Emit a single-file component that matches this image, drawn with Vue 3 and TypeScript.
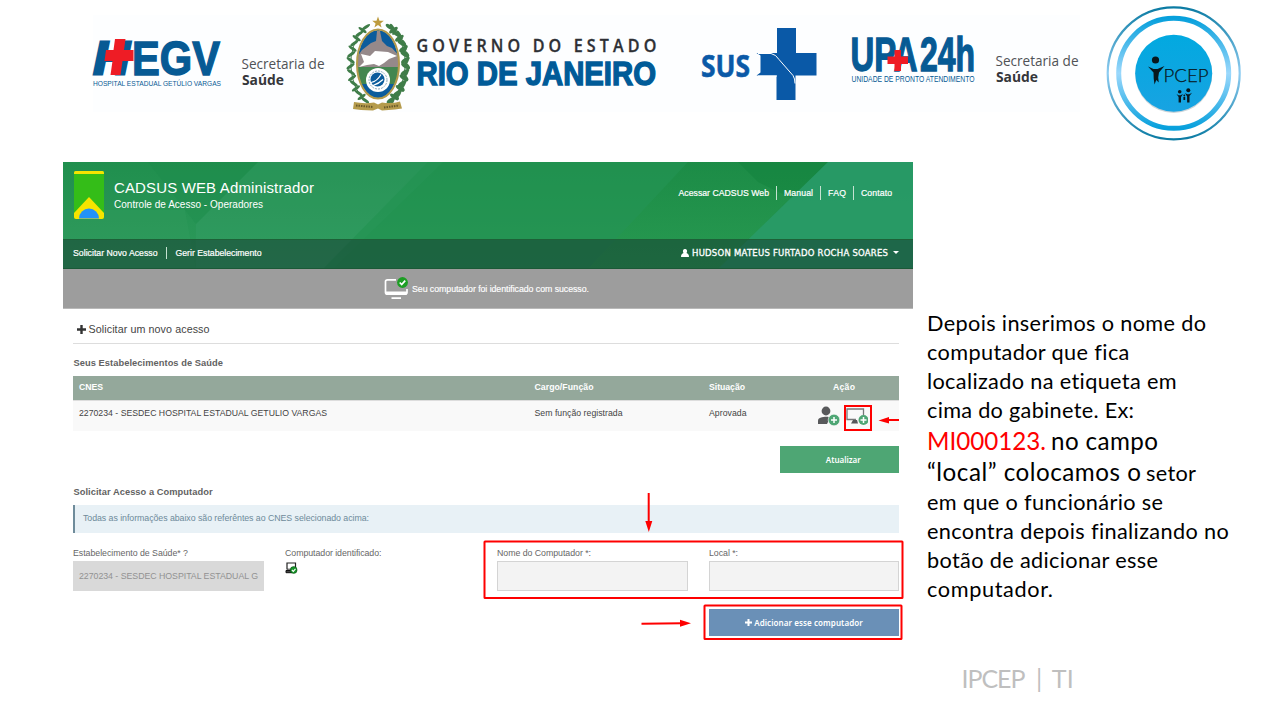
<script setup lang="ts">
interface Line {
  size: 'md' | 'lg' | 'xl'
  parts: { text: string; width: number; kind?: string }[]
}

// Spreads the letters of an element so that its text takes the given width.
const vFit = {
  mounted(el: HTMLElement, binding: { value: number }) {
    const count = (el.textContent ?? '').length
    const natural = el.getBoundingClientRect().width
    if (count > 1) {
      const gap = (binding.value - natural) / (count - 1)
      el.style.letterSpacing = `${gap.toFixed(4)}px`
      el.style.marginRight = `${(-gap).toFixed(4)}px`
    }
  },
}

const lines: Line[] = [
  { size: 'md', parts: [{ text: 'Depois inserimos o nome do', width: 279 }] },
  { size: 'md', parts: [{ text: 'computador que fica', width: 202 }] },
  { size: 'md', parts: [{ text: 'localizado na etiqueta em', width: 250 }] },
  { size: 'md', parts: [{ text: 'cima do gabinete. Ex:', width: 207 }] },
  { size: 'lg', parts: [{ text: 'MI000123.', width: 119, kind: 'red' }, { text: 'no campo', width: 107 }] },
  { size: 'xl', parts: [{ text: '“local” colocamos o', width: 214 }, { text: 'setor', width: 50, kind: 'small' }] },
  { size: 'md', parts: [{ text: 'em que o funcionário se', width: 236 }] },
  { size: 'md', parts: [{ text: 'encontra depois finalizando no', width: 301.5 }] },
  { size: 'md', parts: [{ text: 'botão de adicionar esse', width: 231 }] },
  { size: 'md', parts: [{ text: 'computador.', width: 126 }] },
]

const links = [
  { text: 'Acessar CADSUS Web', width: 90.5 },
  { text: 'Manual', width: 29 },
  { text: 'FAQ', width: 18 },
  { text: 'Contato', width: 31 },
]

const leaves = Array.from({ length: 16 }, (_, i) => {
  const t = -1.12 + (i * 2.2) / 15
  return { dx: Math.cos(t) * 27.5, y: 64 + Math.sin(t) * 41, r: i % 2 ? 35 : -35 }
})
</script>

<template>
  <div class="slide">
    <header class="logos">
      <svg width="260" height="145" viewBox="80 0 260 145">
        <rect x="93" y="15" width="247" height="97" fill="#fdfeff" />
        <g class="heavy blue">
          <text class="thick" x="93.500" y="74" font-size="46" font-style="italic" textLength="36" lengthAdjust="spacingAndGlyphs">H</text>
          <text x="132" y="74.500" font-size="47.500" textLength="88" lengthAdjust="spacingAndGlyphs">EGV</text>
        </g>
        <path d="M115 39h10.500l-1.500 11h9.500v11h-11l-2 14h-10l2-14h-8l1.500-11h7.500z" fill="#ee1c25" />
        <text class="sans blue" x="93" y="85.500" font-size="8" textLength="128" lengthAdjust="spacingAndGlyphs">HOSPITAL ESTADUAL GETÚLIO VARGAS</text>
        <text class="open" x="241.500" y="68.500" font-size="14.500" fill="#505256" textLength="83" lengthAdjust="spacingAndGlyphs">Secretaria de</text>
        <text class="open bold" x="242" y="84.500" font-size="14.500" fill="#35363a" textLength="42" lengthAdjust="spacingAndGlyphs">Saúde</text>
      </svg>

      <svg width="330" height="145" viewBox="340 0 330 145">
        <rect x="340" y="15" width="330" height="97" fill="#fdfeff" />
        <defs><clipPath id="shield"><ellipse cx="378" cy="64" rx="20.500" ry="34" /></clipPath></defs>
        <g fill="none" stroke="#3c7a48" stroke-width="1">
          <path d="M365 27Q349 45 351 68T366 101M391 27Q407 45 405 68T390 101" />
        </g>
        <g v-for="(l, i) in leaves" :key="i" fill="#3f7d49">
          <ellipse :cx="378 - l.dx" :cy="l.y" rx="4.800" ry="1.500" :transform="`rotate(${l.r} ${378 - l.dx} ${l.y})`" />
          <ellipse :cx="378 + l.dx" :cy="l.y" rx="5" ry="2" :transform="`rotate(${-l.r} ${378 + l.dx} ${l.y})`" />
          <ellipse :cx="378 + l.dx + 1" :cy="l.y - 2" rx="3.400" ry="1.400" :transform="`rotate(${l.r + 90} ${378 + l.dx} ${l.y})`" />
        </g>
        <g clip-path="url(#shield)">
          <rect x="355" y="28" width="46" height="72" fill="#0b5c9c" />
          <path d="M355 60L362 50L371 43L376 41L377 31L380 31L382 41L387 46L392 48L401 58V68H355z" fill="#95898a" />
          <rect x="355" y="67" width="46" height="18" fill="#438650" />
          <rect x="355" y="84" width="46" height="16" fill="#0b5c9c" />
        </g>
        <ellipse cx="378" cy="64" rx="21" ry="34.500" fill="none" stroke="#b39a4b" stroke-width="2" />
        <path d="M361 54l9 2 5-5 13 1 9 4-8 3-5 4-5 3-5-2-7 1-8 2 5-5z" fill="#fff" />
        <circle cx="378" cy="80" r="12" fill="#fff" />
        <circle cx="378" cy="80" r="9" fill="none" stroke="#8aa9bd" stroke-width="1" stroke-dasharray="2 1" />
        <circle cx="377.500" cy="79.500" r="7" fill="#0b5c9c" />
        <path d="M371 82.500q6-1 10-8M373 85.500q6-2 10-6" fill="none" stroke="#fff" stroke-width="1.200" />
        <path d="M378 16.500l1.500 4.200h4.300l-3.400 2.700 1.200 4.200-3.600-2.600-3.600 2.600 1.200-4.200-3.400-2.700h4.300z" fill="#bd9b3e" />
        <path d="M354 102q10 2 20 .5l4 2 4-2q10 1.500 18-1l2 7-7 1-13 1-4-2-5 2-12-.5-8-1z" fill="#b59b4c" />
        <path d="M356 105.500l17 1.500M384 107.500l15-2" stroke="#695a2a" stroke-width="2" stroke-dasharray="1.500 1" />
        <g transform="translate(416.500 51.500) scale(.93 1)">
          <text class="open semi" x="0" y="0" font-size="17.300" fill="#2e3035" stroke="#2e3035" stroke-width=".3" textLength="258">GOVERNO DO ESTADO</text>
        </g>
        <text class="heavy blue2" x="416.500" y="85" font-size="33" textLength="239.500" lengthAdjust="spacingAndGlyphs">RIO DE JANEIRO</text>
      </svg>

      <svg width="170" height="145" viewBox="670 0 170 145">
        <rect x="670" y="15" width="170" height="97" fill="#fdfeff" />
        <text class="open bold" x="701" y="77" font-size="31" fill="#0a59a7" stroke="#0a59a7" stroke-width=".6" textLength="49" lengthAdjust="spacingAndGlyphs">SUS</text>
        <path d="M777 28h19v25h20.500v22.500h-21v24.500h-19v-24.500h-20l4-3v-17l-4-2.500h20.500z" fill="#0a59a7" />
        <path d="M758 53.500h13q5 1 8 6l14 16q2 3 2 8M758 76h19" fill="none" stroke="#fff" stroke-width="1" />
      </svg>

      <svg width="260" height="145" viewBox="840 0 260 145">
        <rect x="840" y="15" width="240" height="97" fill="#fdfeff" />
        <text class="heavy blue" x="850.500" y="71" font-size="48" textLength="67" lengthAdjust="spacingAndGlyphs">UPA</text>
        <text class="heavy blue" x="920" y="71" font-size="48" textLength="55" lengthAdjust="spacingAndGlyphs">24h</text>
        <path d="M894.500 50h6.500v6.500h7v7.500h-7v7h-6.500v-7h-7v-7.500h7z" fill="#ee1c25" />
        <text class="sans blue" x="851.500" y="81.500" font-size="8.500" textLength="123" lengthAdjust="spacingAndGlyphs">UNIDADE DE PRONTO ATENDIMENTO</text>
        <text class="open" x="995.500" y="65.500" font-size="14.500" fill="#505256" textLength="83" lengthAdjust="spacingAndGlyphs">Secretaria de</text>
        <text class="open bold" x="996" y="81.500" font-size="14.500" fill="#35363a" textLength="42" lengthAdjust="spacingAndGlyphs">Saúde</text>
      </svg>

      <svg width="150" height="145" viewBox="1100 0 150 145">
        <defs>
          <linearGradient id="outer" x2="0" y2="1">
            <stop offset="0" stop-color="#0b7ba3" /><stop offset=".5" stop-color="#8fcdf2" /><stop offset="1" stop-color="#0b7ba3" />
          </linearGradient>
          <linearGradient id="inner" x2="0" y2="1">
            <stop offset="0" stop-color="#07a0dc" /><stop offset=".5" stop-color="#9bd8fc" /><stop offset="1" stop-color="#07a0dc" />
          </linearGradient>
          <linearGradient id="disc" x2="0" y2="1">
            <stop offset="0" stop-color="#02a9e0" /><stop offset="1" stop-color="#18a3e2" />
          </linearGradient>
        </defs>
        <circle cx="1173.700" cy="73.300" r="66" fill="#fff" stroke="url(#outer)" stroke-width="2.200" />
        <circle cx="1173.700" cy="73.300" r="55" fill="none" stroke="url(#inner)" stroke-width="5" />
        <circle cx="1173.700" cy="74.500" r="38.500" fill="#a9b8c0" opacity=".6" />
        <circle cx="1173.700" cy="73.300" r="38.500" fill="url(#disc)" />
        <g fill="#08171d">
          <circle cx="1155.500" cy="60" r="3.600" />
          <path d="M1148 66.500l5.500 2.500h4l7-3-5.500 6.500-.8 5 .6 5-2.500-2.500-1.800 4.500-.8-6-.2-6z" />
          <circle cx="1179.700" cy="91.800" r="1.800" /><circle cx="1188.300" cy="90.300" r="2" />
          <path d="M1176.500 94l2 1.200h2l2.500-1.200-2 3v5.500h-2.400V97zM1185 93l2.300 1.300h2l2.700-1.500-2.500 3.200v6.500h-2.400V96.500z" />
          <circle cx="1184.300" cy="95.500" r=".9" /><path d="M1183.400 97h1.800v3h-1.800z" />
        </g>
        <text class="pcep" x="1163.500" y="81.500" font-size="17" textLength="45" lengthAdjust="spacingAndGlyphs">PCEP</text>
      </svg>
    </header>

    <main class="body">
      <section class="app">
        <div class="top">
          <svg class="pattern" width="850" height="107" viewBox="0 0 850 107">
            <defs>
              <linearGradient id="base" x2="0" y2="1"><stop offset="0" stop-color="#208f4e" /><stop offset="1" stop-color="#2d9a5b" /></linearGradient>
              <linearGradient id="band" x2="0" y2="1"><stop offset="0" stop-color="#1a8a43" /><stop offset="1" stop-color="#269a4d" /></linearGradient>
            </defs>
            <rect width="850" height="107" fill="url(#base)" />
            <path d="M85 0L133 62L195 0z" fill="#188446" opacity=".18" />
            <path d="M133 62L195 0H380L270 107H133z" fill="#3da070" opacity=".28" />
            <path d="M0 48H122L133 107H0z" fill="#38a062" opacity=".25" />
            <path d="M365 0H625L525 107H260z" fill="#219250" opacity=".6" />
            <path d="M625 0H765L655 107H525z" fill="url(#band)" opacity=".7" />
            <path d="M675 0H765L730 37L695 20z" fill="#0f7d38" opacity=".35" />
            <path d="M765 0H850V107H655z" fill="#289a66" opacity=".95" />
          </svg>
          <div class="brand-row">
            <svg class="flag" width="30" height="48" viewBox="0 0 30 48">
              <rect width="30" height="48" rx="1.500" fill="#34bd18" />
              <path d="M0 3V1.500Q0 0 1.500 0h27Q30 0 30 1.500V3z" fill="#f5e400" />
              <path d="M0 42L15 26L30 42V46q0 2-2 2H2q-2 0-2-2z" fill="#f5e400" />
              <path d="M5 47.500a10 10 0 0 1 20 0z" fill="#2292f8" />
            </svg>
            <div class="brand">
              <div class="name"><span v-fit="200">CADSUS WEB Administrador</span></div>
              <div class="sub"><span v-fit="149">Controle de Acesso - Operadores</span></div>
            </div>
            <nav class="links">
              <a v-for="l in links" :key="l.text"><span v-fit="l.width">{{ l.text }}</span></a>
            </nav>
          </div>
          <div class="menu">
            <nav class="links left">
              <a><span v-fit="84.5">Solicitar Novo Acesso</span></a>
              <a><span v-fit="86">Gerir Estabelecimento</span></a>
            </nav>
            <div class="user">
              <svg width="8" height="8" viewBox="0 0 8 8"><path d="M4 0a2 2.300 0 0 1 1.500 3.900Q8 4.500 8 8H0Q0 4.500 2.500 3.900A2 2.300 0 0 1 4 0z" fill="#fff" /></svg>
              <span v-fit="196">HUDSON MATEUS FURTADO ROCHA SOARES</span>
              <i class="caret"></i>
            </div>
          </div>
        </div>
        <div class="notice">
          <svg width="25" height="24" viewBox="0 0 25 24">
            <path d="M12 2.800H3.500Q1.500 2.800 1.500 4.500V15.500q0 1.500 2 1.500H21q2 0 2-1.500V12" fill="none" stroke="#fff" stroke-width="1.700" />
            <path d="M1.500 14.500h21.500v2.500q0 1-1.500 1H3q-1.500 0-1.500-1zM7.500 20.300h9.500v1.700h-9.500z" fill="#fff" />
            <circle cx="18.500" cy="5.500" r="5.400" fill="#1d9e24" />
            <path d="M15.700 5.500l2 2 3.500-3.800" fill="none" stroke="#fff" stroke-width="1.700" />
          </svg>
          <span v-fit="177">Seu computador foi identificado com sucesso.</span>
        </div>

        <div class="content">
          <div class="new">
            <svg width="9" height="9" viewBox="0 0 9 9"><path d="M3.300 0h2.400v3.300H9v2.400H5.700V9H3.300V5.700H0V3.300h3.300z" fill="#333" /></svg>
            <span v-fit="121">Solicitar um novo acesso</span>
          </div>
          <h2><span v-fit="149.5">Seus Estabelecimentos de Saúde</span></h2>
          <div class="row head">
            <b><span v-fit="24">CNES</span></b>
            <b><span v-fit="59">Cargo/Função</span></b>
            <b><span v-fit="36">Situação</span></b>
            <b class="act"><span v-fit="22">Ação</span></b>
          </div>
          <div class="row data">
            <div><span v-fit="248">2270234 - SESDEC HOSPITAL ESTADUAL GETULIO VARGAS</span></div>
            <div><span v-fit="88">Sem função registrada</span></div>
            <div><span v-fit="37.5">Aprovada</span></div>
            <div class="icons">
              <svg width="23" height="20" viewBox="0 0 23 20">
                <circle cx="9" cy="5" r="4.400" fill="#58595b" />
                <path d="M1 18V14.500Q1 11.500 8 10.800H11L13 12L10 18z" fill="#58595b" />
                <circle cx="17" cy="14" r="5.800" fill="#4ea674" stroke="#f9f9f9" stroke-width=".6" />
                <path d="M17 11v6M14 14h6" stroke="#fff" stroke-width="1.500" />
              </svg>
              <svg width="24" height="20" viewBox="0 0 24 20">
                <path d="M19.500 9V3H3V13.500H12" fill="none" stroke="#77787a" stroke-width="1.300" />
                <path d="M9 14h4l1 3.500H7z" fill="#55565a" />
                <circle cx="19.500" cy="14" r="5" fill="#4ea674" />
                <path d="M19.500 11v6M16.500 14h6" stroke="#fff" stroke-width="1.500" />
              </svg>
            </div>
          </div>
          <div class="actions"><button class="green"><span v-fit="35">Atualizar</span></button></div>
          <h2 class="second"><span v-fit="139">Solicitar Acesso a Computador</span></h2>
          <div class="info"><span v-fit="286">Todas as informações abaixo são referêntes ao CNES selecionado acima:</span></div>
          <div class="form">
            <label><span v-fit="115">Estabelecimento de Saúde* ?</span><div class="field off"><span v-fit="179">2270234 - SESDEC HOSPITAL ESTADUAL G</span></div></label>
            <label><span v-fit="96.5">Computador identificado:</span>
              <svg class="pc" width="13" height="12" viewBox="0 0 13 12">
                <path d="M2 7.500V1h8.500V5" fill="none" stroke="#222" stroke-width="1.200" />
                <path d="M2 7.200h4" stroke="#222" stroke-width=".9" />
                <path d="M1 8.500h6v2.200h-6z" fill="#444" stroke="#111" stroke-width="1" />
                <circle cx="8.700" cy="8" r="3.400" fill="#169629" stroke="#063b0b" stroke-width=".5" />
                <path d="M6.900 8l1.400 1.400 2.200-2.600" fill="none" stroke="#fff" stroke-width="1.100" />
              </svg>
            </label>
            <label><span v-fit="94">Nome do Computador *:</span><div class="field"></div></label>
            <label><span v-fit="29">Local *:</span><div class="field"></div></label>
          </div>
          <div class="actions last">
            <button class="add">
              <svg width="7" height="7" viewBox="0 0 9 9"><path d="M3.200 0h2.600v3.200H9v2.600H5.800V9H3.200V5.800H0V3.200h3.200z" fill="#fff" /></svg>
              <span v-fit="108.5">Adicionar esse computador</span>
            </button>
          </div>
        </div>

        <svg class="marks" width="850" height="488" viewBox="63 162 850 488">
          <g fill="none" stroke="#fe0000" stroke-width="2">
            <rect x="845" y="406" width="26" height="24" />
            <rect x="484.500" y="541.500" width="418" height="56.500" rx=".5" />
            <rect x="704.500" y="605.500" width="197" height="33.500" rx=".5" />
            <path d="M899 420H888M648.700 493V523M641.500 623.800L682 623.200" />
          </g>
          <path d="M878.500 420.500l10.500-3.500v6.500zM645.300 521h7l-3.500 11zM680 619.800l11 3.400-11 3.600z" fill="#fe0000" />
        </svg>
      </section>

      <aside class="text">
        <div v-for="(line, i) in lines" :key="i" class="line" :class="line.size">
          <span v-for="p in line.parts" :key="p.text" class="part" :class="p.kind"><span v-fit="p.width">{{ p.text }}</span></span>
        </div>
        <footer><span v-fit="64">IPCEP</span><span class="bar">|</span><span v-fit="22">TI</span></footer>
      </aside>
    </main>
  </div>
</template>

<style>
body { background: #fff; overflow: hidden; }
</style>

<style scoped>
.slide { width: 1280px; height: 720px; overflow: hidden; background: #fff; font-family: "Liberation Sans", Arial, sans-serif; }
.slide span { white-space: nowrap; display: inline-block; }
.logos { display: flex; height: 145px; padding-left: 80px; }
.logos svg { flex: none; }
.heavy { font-family: "Liberation Sans", sans-serif; font-weight: 700; stroke-width: 1.4px; }
.thick { stroke-width: 3px; }
.sans { font-family: "Liberation Sans", sans-serif; }
.open { font-family: "Open Sans", sans-serif; }
.pcep { font-family: Lato, sans-serif; font-weight: 300; fill: #08171d; stroke: #08171d; stroke-width: .25px; }
.bold { font-weight: 700; }
.semi { font-weight: 600; }
.blue { fill: #075a94; }
.heavy.blue { stroke: #075a94; }
.blue2 { fill: #005b98; stroke: #005b98; }

.body { display: flex; padding: 17px 0 0 63px; }
.app { position: relative; width: 850px; height: 488px; flex: none; }
.top { position: relative; height: 107px; color: #fff; }
.pattern { position: absolute; left: 0; top: 0; }
.brand-row { position: relative; display: flex; height: 77px; }
.flag { margin: 9px 10px 0 11px; flex: none; }
.brand { padding-top: 17px; flex: 1; }
.name { font-size: 15px; line-height: 18px; }
.sub { font-size: 10px; line-height: 15px; }
.links { display: flex; align-items: center; font-size: 8.7px; -webkit-text-stroke: .2px #fff; }
.links a { height: 14px; line-height: 14px; padding: 0 7px; border-left: 1px solid #c5e2d1; }
.links a:first-child { border: 0; }
.brand-row .links { padding: 24px 14px 0 0; height: 14px; }
.menu { position: relative; display: flex; justify-content: space-between; background: rgba(20, 52, 46, .5); border-top: 1px solid #1d6138; box-sizing: border-box; height: 30px; border-bottom: 1px solid #1b5937; }
.menu .left { padding: 0 0 3px 3px; }
.menu .left a { height: 12px; line-height: 12px; padding: 0 8.500px 0 8.500px; }
.menu .left a:first-child { padding-left: 7px; }
.user { display: flex; align-items: center; font: 8.500px "DejaVu Sans", sans-serif; padding: 0 14px 3px 0; -webkit-text-stroke: .3px #fff; }
.user svg { margin-right: 3px; }
.caret { border: 3px solid transparent; border-top-color: #fff; border-bottom: 0; margin-left: 5px; }
.notice { height: 40px; background: #9d9d9d; display: flex; align-items: center; padding-left: 320.500px; color: #fff; font-size: 8.8px; box-sizing: border-box; border-bottom: 1px solid #b9b9b9; -webkit-text-stroke: .15px #fff; }
.notice svg { margin-right: 3.500px; position: relative; top: .5px; }
.content { padding: 0 14px 0 10px; color: #444; }
.new { display: flex; align-items: center; height: 35px; padding: 6px 0 0 3.500px; border-bottom: 1px solid #ddd; font-size: 10.7px; line-height: 14px; box-sizing: border-box; }
.new svg { margin-right: 3px; }
h2 { margin: 0; height: 32px; font-size: 9.3px; font-weight: 700; color: #626262; line-height: 13px; padding: 13px 0 0 .5px; box-sizing: border-box; }
.row { display: grid; grid-template-columns: 455.500px 174.500px 110px 1fr; padding-left: 6px; font-size: 8.700px; }
.head { height: 25px; background: #94a89b; color: #fff; line-height: 23px; border-bottom: 1px solid #ddd; box-sizing: border-box; }
.head .act { padding-left: 14px; }
.data { height: 30px; background: #f9f9f9; line-height: 25px; }
.icons { display: flex; gap: 4px; padding-top: 5px; margin-left: -2px; }
.actions { display: flex; justify-content: flex-end; padding-top: 15px; }
button { border: 0; padding: 0; color: #fff; display: flex; justify-content: center; align-items: center; font: 600 8px "Noto Sans", sans-serif; }
.green { width: 119.500px; height: 27px; background: #4ea674; padding-left: 8px; }
h2.second { height: 32px; padding-top: 13px; }
.info { height: 27.500px; line-height: 26px; padding-left: 8px; border-left: 2px solid #6f8c9b; background: #e8f1f6; color: #6d8a9a; font-size: 8.800px; box-sizing: border-box; }
.form { display: grid; grid-template-columns: 191px 191px 191px 190px; column-gap: 21px; padding-top: 14px; }
.form label { display: block; height: 44px; font-size: 8.800px; line-height: 12px; color: #666; }
.form label > span { display: table; height: 12px; }
.field { height: 30px; margin-top: 2px; border: 1px solid #d4d4d4; background: #f3f3f3; box-sizing: border-box; }
.field.off { border-color: #d9d9d9; background: #d9d9d9; color: #929292; line-height: 28px; padding-left: 5px; }
.pc { display: block; margin-top: 3px; }
.last { padding-top: 18.500px; }
.add { width: 190px; height: 27px; background: #6a90b7; }
.add svg { margin-right: 2px; }
.marks { position: absolute; left: 0; top: 0; }

.text { padding: 146.500px 0 0 14px; font-family: Lato, "Open Sans", sans-serif; color: #000; }
.line { display: flex; align-items: baseline; height: 29px; line-height: 29px; font-size: 21.700px; }
.line.lg { height: 31px; line-height: 31px; font-size: 24.200px; }
.line.xl { height: 32px; line-height: 32px; font-size: 24.200px; }
.part { margin-right: 5px; }
.red { color: #fe0000; }
.small { font-size: 21.700px; }
footer { display: flex; color: #bfbfbf; font-size: 25px; line-height: 30px; padding: 59px 0 0 34.500px; }
.bar { margin: 0 9.500px 0 10.500px; }
</style>
